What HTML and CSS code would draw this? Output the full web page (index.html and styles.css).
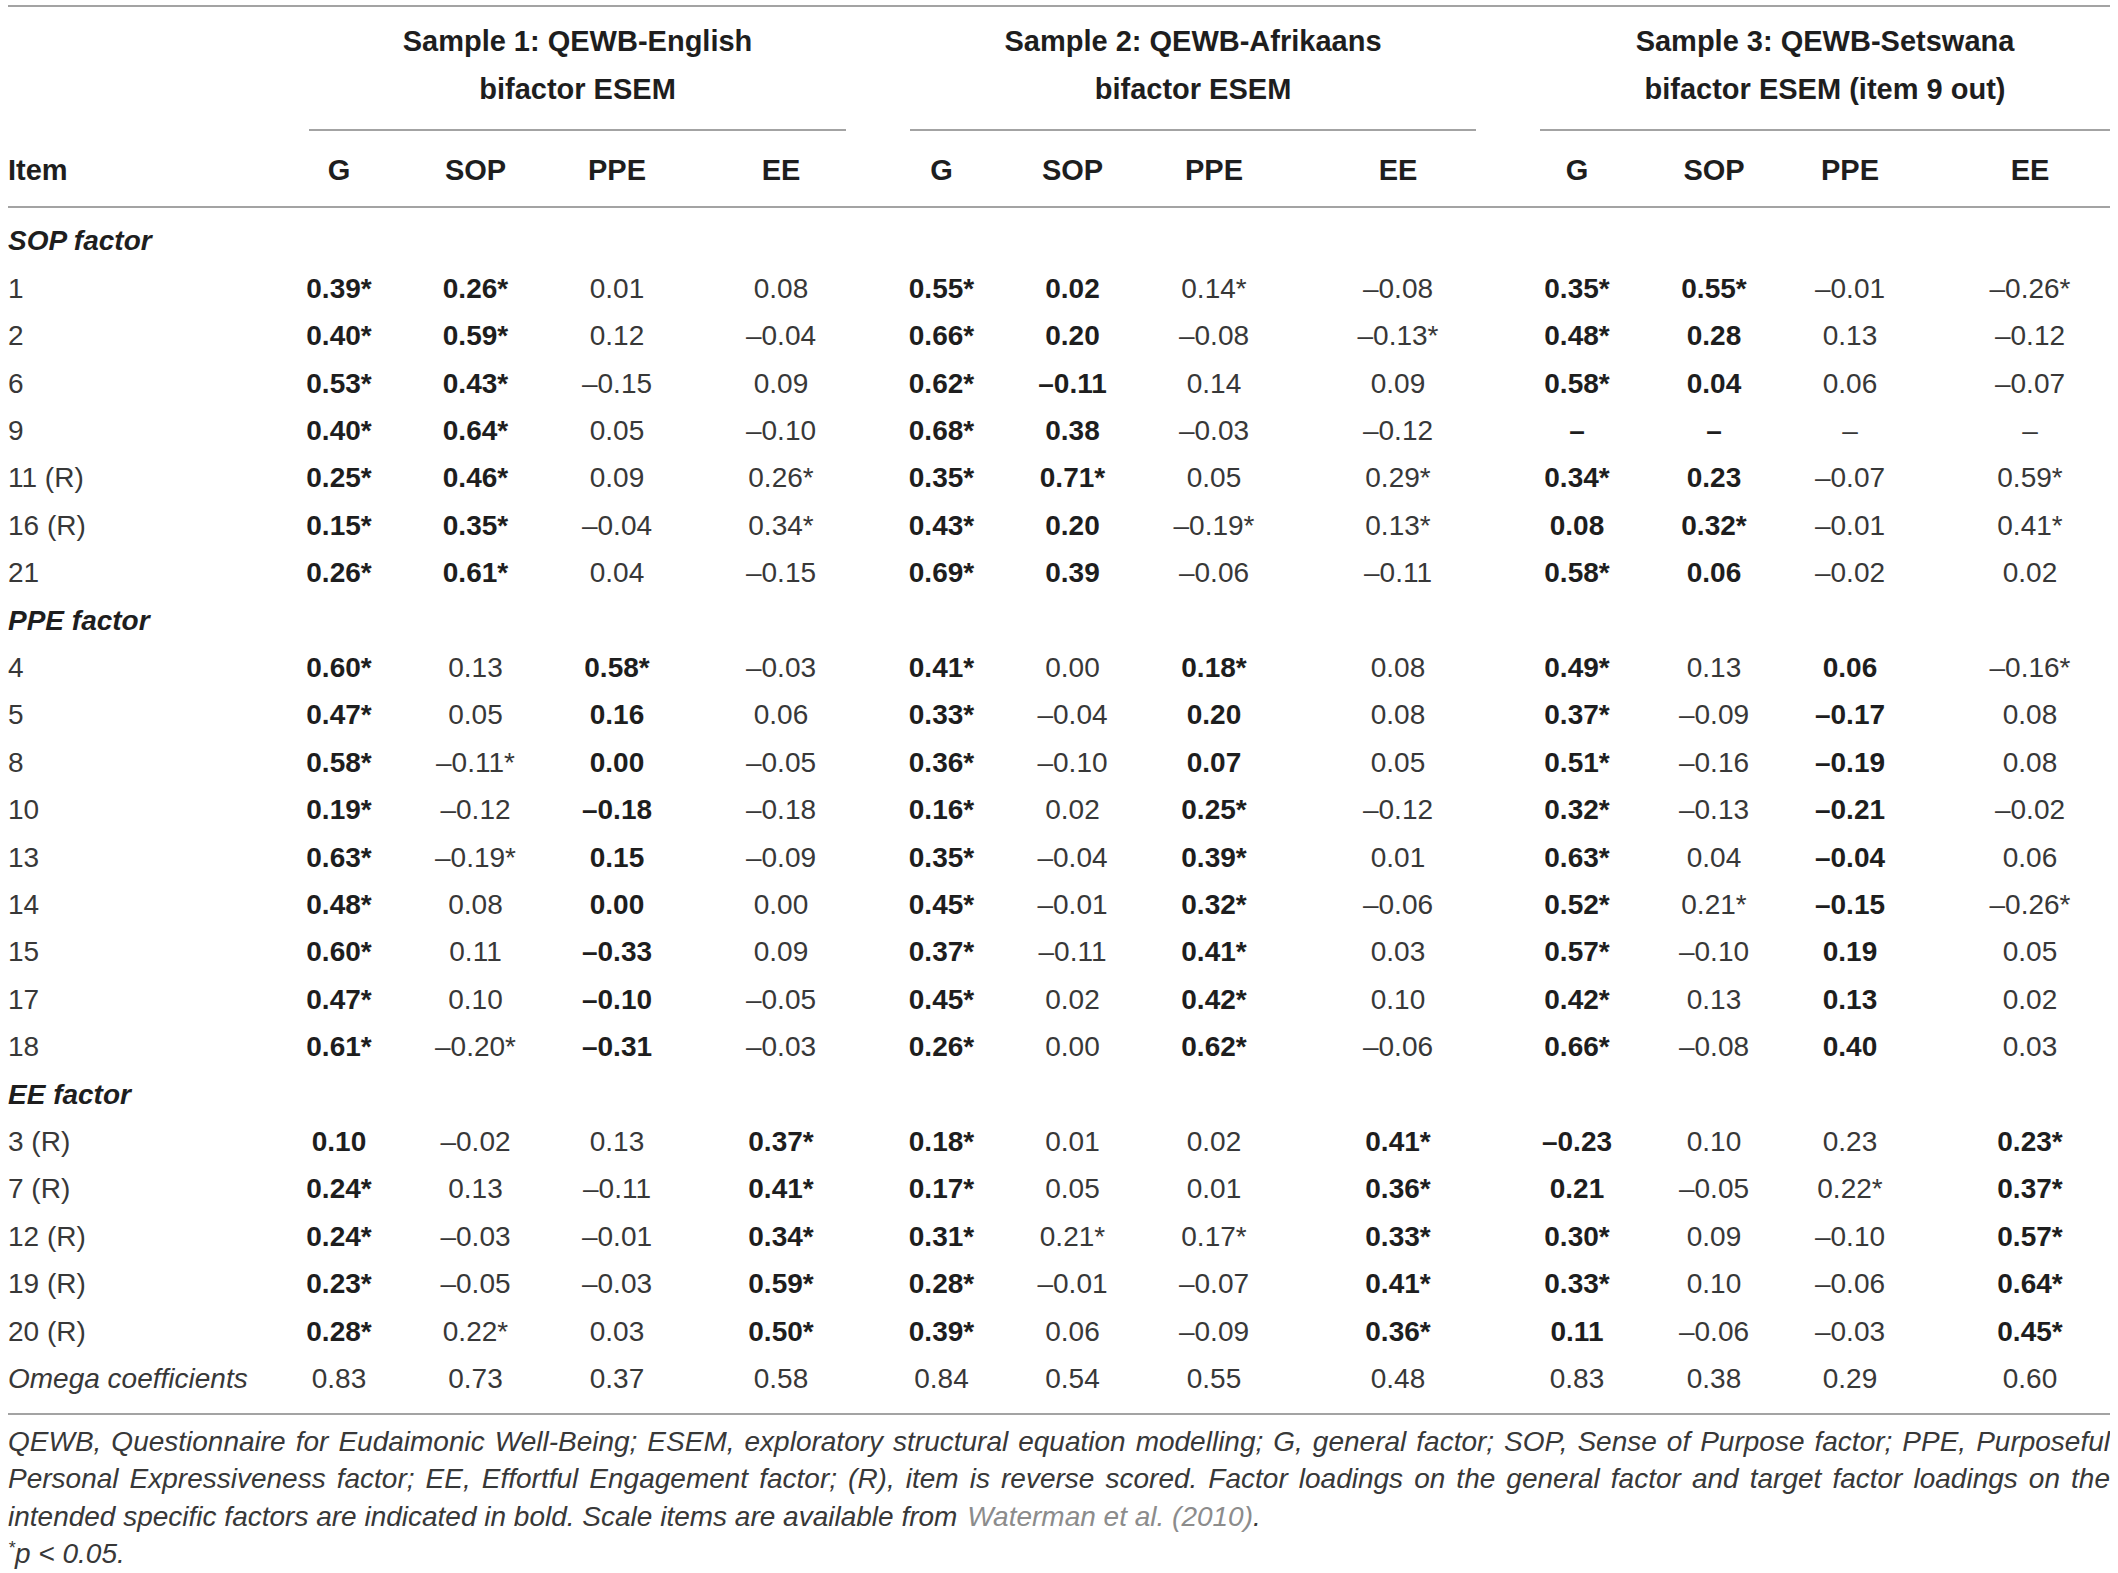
FILE: index.html
```html
<!DOCTYPE html>
<html lang="en">
<head>
<meta charset="utf-8">
<title>QEWB bifactor ESEM loadings</title>
<link rel="stylesheet" href="styles.css">
</head>
<body>
<div class="tbl">
  <div class="rule"></div>
  <div class="grid head">
    <div class="c-item"></div>
    <div class="group"><span>Sample 1: QEWB-English</span><span>bifactor ESEM</span></div>
    <div class="group"><span>Sample 2: QEWB-Afrikaans</span><span>bifactor ESEM</span></div>
    <div class="group"><span>Sample 3: QEWB-Setswana</span><span>bifactor ESEM (item 9 out)</span></div>
  </div>
  <div class="grid cols">
    <div class="c-item">Item</div>
    <div>G</div><div>SOP</div><div>PPE</div><div>EE</div>
    <div>G</div><div>SOP</div><div>PPE</div><div>EE</div>
    <div>G</div><div>SOP</div><div>PPE</div><div>EE</div>
  </div>
  <div class="rule"></div>
  <div class="grid body">
    <div class="sec">SOP factor</div>

    <div class="c-item">1</div>
    <div class="b">0.39*</div><div class="b">0.26*</div><div>0.01</div><div>0.08</div>
    <div class="b">0.55*</div><div class="b">0.02</div><div>0.14*</div><div>–0.08</div>
    <div class="b">0.35*</div><div class="b">0.55*</div><div>–0.01</div><div>–0.26*</div>

    <div class="c-item">2</div>
    <div class="b">0.40*</div><div class="b">0.59*</div><div>0.12</div><div>–0.04</div>
    <div class="b">0.66*</div><div class="b">0.20</div><div>–0.08</div><div>–0.13*</div>
    <div class="b">0.48*</div><div class="b">0.28</div><div>0.13</div><div>–0.12</div>

    <div class="c-item">6</div>
    <div class="b">0.53*</div><div class="b">0.43*</div><div>–0.15</div><div>0.09</div>
    <div class="b">0.62*</div><div class="b">–0.11</div><div>0.14</div><div>0.09</div>
    <div class="b">0.58*</div><div class="b">0.04</div><div>0.06</div><div>–0.07</div>

    <div class="c-item">9</div>
    <div class="b">0.40*</div><div class="b">0.64*</div><div>0.05</div><div>–0.10</div>
    <div class="b">0.68*</div><div class="b">0.38</div><div>–0.03</div><div>–0.12</div>
    <div class="b">–</div><div class="b">–</div><div>–</div><div>–</div>

    <div class="c-item">11 (R)</div>
    <div class="b">0.25*</div><div class="b">0.46*</div><div>0.09</div><div>0.26*</div>
    <div class="b">0.35*</div><div class="b">0.71*</div><div>0.05</div><div>0.29*</div>
    <div class="b">0.34*</div><div class="b">0.23</div><div>–0.07</div><div>0.59*</div>

    <div class="c-item">16 (R)</div>
    <div class="b">0.15*</div><div class="b">0.35*</div><div>–0.04</div><div>0.34*</div>
    <div class="b">0.43*</div><div class="b">0.20</div><div>–0.19*</div><div>0.13*</div>
    <div class="b">0.08</div><div class="b">0.32*</div><div>–0.01</div><div>0.41*</div>

    <div class="c-item">21</div>
    <div class="b">0.26*</div><div class="b">0.61*</div><div>0.04</div><div>–0.15</div>
    <div class="b">0.69*</div><div class="b">0.39</div><div>–0.06</div><div>–0.11</div>
    <div class="b">0.58*</div><div class="b">0.06</div><div>–0.02</div><div>0.02</div>

    <div class="sec">PPE factor</div>

    <div class="c-item">4</div>
    <div class="b">0.60*</div><div>0.13</div><div class="b">0.58*</div><div>–0.03</div>
    <div class="b">0.41*</div><div>0.00</div><div class="b">0.18*</div><div>0.08</div>
    <div class="b">0.49*</div><div>0.13</div><div class="b">0.06</div><div>–0.16*</div>

    <div class="c-item">5</div>
    <div class="b">0.47*</div><div>0.05</div><div class="b">0.16</div><div>0.06</div>
    <div class="b">0.33*</div><div>–0.04</div><div class="b">0.20</div><div>0.08</div>
    <div class="b">0.37*</div><div>–0.09</div><div class="b">–0.17</div><div>0.08</div>

    <div class="c-item">8</div>
    <div class="b">0.58*</div><div>–0.11*</div><div class="b">0.00</div><div>–0.05</div>
    <div class="b">0.36*</div><div>–0.10</div><div class="b">0.07</div><div>0.05</div>
    <div class="b">0.51*</div><div>–0.16</div><div class="b">–0.19</div><div>0.08</div>

    <div class="c-item">10</div>
    <div class="b">0.19*</div><div>–0.12</div><div class="b">–0.18</div><div>–0.18</div>
    <div class="b">0.16*</div><div>0.02</div><div class="b">0.25*</div><div>–0.12</div>
    <div class="b">0.32*</div><div>–0.13</div><div class="b">–0.21</div><div>–0.02</div>

    <div class="c-item">13</div>
    <div class="b">0.63*</div><div>–0.19*</div><div class="b">0.15</div><div>–0.09</div>
    <div class="b">0.35*</div><div>–0.04</div><div class="b">0.39*</div><div>0.01</div>
    <div class="b">0.63*</div><div>0.04</div><div class="b">–0.04</div><div>0.06</div>

    <div class="c-item">14</div>
    <div class="b">0.48*</div><div>0.08</div><div class="b">0.00</div><div>0.00</div>
    <div class="b">0.45*</div><div>–0.01</div><div class="b">0.32*</div><div>–0.06</div>
    <div class="b">0.52*</div><div>0.21*</div><div class="b">–0.15</div><div>–0.26*</div>

    <div class="c-item">15</div>
    <div class="b">0.60*</div><div>0.11</div><div class="b">–0.33</div><div>0.09</div>
    <div class="b">0.37*</div><div>–0.11</div><div class="b">0.41*</div><div>0.03</div>
    <div class="b">0.57*</div><div>–0.10</div><div class="b">0.19</div><div>0.05</div>

    <div class="c-item">17</div>
    <div class="b">0.47*</div><div>0.10</div><div class="b">–0.10</div><div>–0.05</div>
    <div class="b">0.45*</div><div>0.02</div><div class="b">0.42*</div><div>0.10</div>
    <div class="b">0.42*</div><div>0.13</div><div class="b">0.13</div><div>0.02</div>

    <div class="c-item">18</div>
    <div class="b">0.61*</div><div>–0.20*</div><div class="b">–0.31</div><div>–0.03</div>
    <div class="b">0.26*</div><div>0.00</div><div class="b">0.62*</div><div>–0.06</div>
    <div class="b">0.66*</div><div>–0.08</div><div class="b">0.40</div><div>0.03</div>

    <div class="sec">EE factor</div>

    <div class="c-item">3 (R)</div>
    <div class="b">0.10</div><div>–0.02</div><div>0.13</div><div class="b">0.37*</div>
    <div class="b">0.18*</div><div>0.01</div><div>0.02</div><div class="b">0.41*</div>
    <div class="b">–0.23</div><div>0.10</div><div>0.23</div><div class="b">0.23*</div>

    <div class="c-item">7 (R)</div>
    <div class="b">0.24*</div><div>0.13</div><div>–0.11</div><div class="b">0.41*</div>
    <div class="b">0.17*</div><div>0.05</div><div>0.01</div><div class="b">0.36*</div>
    <div class="b">0.21</div><div>–0.05</div><div>0.22*</div><div class="b">0.37*</div>

    <div class="c-item">12 (R)</div>
    <div class="b">0.24*</div><div>–0.03</div><div>–0.01</div><div class="b">0.34*</div>
    <div class="b">0.31*</div><div>0.21*</div><div>0.17*</div><div class="b">0.33*</div>
    <div class="b">0.30*</div><div>0.09</div><div>–0.10</div><div class="b">0.57*</div>

    <div class="c-item">19 (R)</div>
    <div class="b">0.23*</div><div>–0.05</div><div>–0.03</div><div class="b">0.59*</div>
    <div class="b">0.28*</div><div>–0.01</div><div>–0.07</div><div class="b">0.41*</div>
    <div class="b">0.33*</div><div>0.10</div><div>–0.06</div><div class="b">0.64*</div>

    <div class="c-item">20 (R)</div>
    <div class="b">0.28*</div><div>0.22*</div><div>0.03</div><div class="b">0.50*</div>
    <div class="b">0.39*</div><div>0.06</div><div>–0.09</div><div class="b">0.36*</div>
    <div class="b">0.11</div><div>–0.06</div><div>–0.03</div><div class="b">0.45*</div>

    <div class="c-item it">Omega coefficients</div>
    <div>0.83</div><div>0.73</div><div>0.37</div><div>0.58</div>
    <div>0.84</div><div>0.54</div><div>0.55</div><div>0.48</div>
    <div>0.83</div><div>0.38</div><div>0.29</div><div>0.60</div>
  </div>
  <div class="rule"></div>
  <div class="note">
    <p>QEWB, Questionnaire for Eudaimonic Well-Being; ESEM, exploratory structural equation modelling; G, general factor; SOP, Sense of Purpose factor; PPE, Purposeful Personal Expressiveness factor; EE, Effortful Engagement factor; (R), item is reverse scored. Factor loadings on the general factor and target factor loadings on the intended specific factors are indicated in bold. Scale items are available from <a href="#">Waterman et al. (2010)</a>.</p>
    <p><sup>*</sup>p &lt; 0.05.</p>
  </div>
</div>
</body>
</html>
```

FILE: styles.css
```css
html, body {
  background: #ffffff;
}
body {
  margin: 5px 8px 0 8px;
  font-family: "Liberation Sans", Arial, sans-serif;
  font-size: 28px;
  color: #383838;
}
.rule {
  height: 2px;
  background: #a3a3a3;
}
.grid {
  display: grid;
  grid-template-columns: 237px 188px 85px 198px 130px 191px 71px 212px 156px 202px 72px 200px 160px;
}
.grid > div {
  text-align: center;
  white-space: nowrap;
}
.grid > .c-item {
  text-align: left;
}
.head .group {
  grid-column: span 4;
  margin-left: 64px;
  padding: 10px 0 16px;
  border-bottom: 2px solid #a3a3a3;
  display: flex;
  flex-direction: column;
  align-items: center;
  font-weight: bold;
  font-size: 29px;
  line-height: 48px;
  color: #1e1e1e;
}
.cols {
  padding: 16px 0 12px;
  font-weight: bold;
  font-size: 29px;
  line-height: 47px;
  color: #1e1e1e;
}
.body {
  padding: 9.3px 0 10.7px;
  line-height: 47.4px;
}
.body .sec {
  grid-column: 1 / -1;
  text-align: left;
  font-weight: bold;
  font-style: italic;
  color: #1e1e1e;
}
.body .b {
  font-weight: bold;
  color: #1e1e1e;
}
.body .it {
  font-style: italic;
}
.note {
  padding-top: 7.5px;
  font-style: italic;
  line-height: 37.5px;
  color: #383838;
}
.note p {
  margin: 0;
  text-align: justify;
}
.note sup {
  font-size: 18px;
  line-height: 0;
  vertical-align: 9px;
}
.note a {
  color: #8c8c8c;
  text-decoration: none;
  margin-left: 2px;
}
```
